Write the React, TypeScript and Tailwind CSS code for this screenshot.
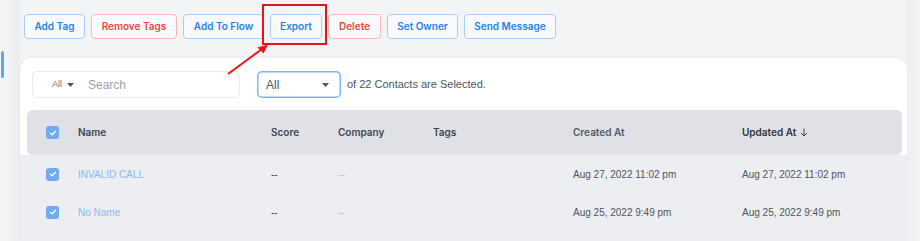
import React from 'react';

const cols = 'grid grid-cols-[32px_193px_67px_95px_140px_169px_1fr] items-center';

const actions = [
  { label: 'Add Tag', w: 'w-[61px]', danger: false },
  { label: 'Remove Tags', w: 'w-[86px]', danger: true },
  { label: 'Add To Flow', w: 'w-[81px]', danger: false },
  { label: 'Export', w: 'w-[52px]', danger: false },
  { label: 'Delete', w: 'w-[53px]', danger: true },
  { label: 'Set Owner', w: 'w-[71px]', danger: false },
  { label: 'Send Message', w: 'w-[92px]', danger: false },
];

const contacts = [
  { name: 'INVALID CALL', created: 'Aug 27, 2022 11:02 pm', updated: 'Aug 27, 2022 11:02 pm' },
  { name: 'No Name', created: 'Aug 25, 2022 9:49 pm', updated: 'Aug 25, 2022 9:49 pm' },
];

const Check: React.FC = () => (
  <span className="w-[13px] h-[13px] rounded-[3px] bg-[#72aaf2] flex items-center justify-center">
    <svg width="8" height="8" viewBox="0 0 8 8" fill="none">
      <path d="M1.5 4.2 3.2 5.8 6.5 2.3" stroke="white" strokeWidth="1.3" strokeLinecap="round" strokeLinejoin="round" />
    </svg>
  </span>
);

const App: React.FC = () => {
  return (
    <div className="relative w-[920px] h-[241px] overflow-hidden bg-[#f3f4f6] flex font-['Inter',sans-serif]">
      {/* sidebar edge */}
      <div className="w-[20px] shrink-0 bg-gradient-to-r from-[#f5f6f8] to-[#eceef1]">
        <div className="mt-[51px] ml-[1px] w-[3px] h-[27px] rounded-[2px] bg-[#63a4f4]" />
      </div>

      <div className="w-[887px] shrink-0 flex flex-col">
        {/* bulk actions */}
        <div className="flex gap-[6px] pl-[4px] pt-[14px]">
          {actions.map((a) => (
            <button
              key={a.label}
              className={`${a.w} h-[25px] rounded-[4px] border bg-[#f8fafd] text-[10px] font-semibold flex items-center justify-center ${
                a.danger ? 'border-[#f6b9b9] text-[#ef4444]' : 'border-[#a9cdf6] text-[#2383e8]'
              }`}
            >
              {a.label}
            </button>
          ))}
        </div>

        {/* card */}
        <div className="mt-[19px] flex-1 rounded-t-[12px] bg-white shadow-[0_0_4px_rgba(0,0,0,0.05)] flex flex-col overflow-hidden">
          <div className="flex items-center px-[12px] pt-[13px] font-['Liberation_Sans',Arial,sans-serif]">
            <div className="w-[208px] h-[27px] rounded-[5px] border border-[#e8eaee] flex items-center pl-[19px]">
              <span className="text-[9px] text-[#6b7280]">All</span>
              <svg className="ml-[5px]" width="7" height="4" viewBox="0 0 7 4">
                <path d="M0 0h7L3.5 4z" fill="#4b5563" />
              </svg>
              <span className="ml-[14px] text-[12px] text-[#9ca3af]">Search</span>
            </div>
            <div className="ml-[17px] w-[84px] h-[27px] rounded-[5px] shadow-[inset_0_0_0_1.5px_#80b5f3] flex items-center justify-between pl-[9px] pr-[12px]">
              <span className="text-[12px] text-[#4b5563]">All</span>
              <svg width="7" height="4" viewBox="0 0 7 4">
                <path d="M0 0h7L3.5 4z" fill="#4b5563" />
              </svg>
            </div>
            <span className="ml-[6px] text-[11px] text-[#4b5563]">of 22 Contacts are Selected.</span>
          </div>

          {/* table header */}
          <div className={`${cols} mt-[12px] ml-[7px] mr-[5px] h-[45px] rounded-[6px] bg-[#dfe1e6] pl-[19px] text-[10px] font-semibold text-[#3f4551]`}>
            <Check />
            <span>Name</span>
            <span>Score</span>
            <span>Company</span>
            <span>Tags</span>
            <span className="text-[#555b66]">Created At</span>
            <span className="flex items-center gap-[4px] text-[#2f3440]">
              Updated At
              <svg width="8" height="9" viewBox="0 0 8 9" fill="none">
                <path d="M4 0.5v7.5M1 5l3 3 3-3" stroke="#3f4551" strokeWidth="1" />
              </svg>
            </span>
          </div>

          {/* rows */}
          <div className="flex-1 bg-[#edeef1] font-['Liberation_Sans',Arial,sans-serif] text-[10px]">
            {contacts.map((c) => (
              <div key={c.name} className={`${cols} h-[38px] pl-[26px]`}>
                <Check />
                <span className="text-[#8bb9f0]">{c.name}</span>
                <span className="text-[#374151]">--</span>
                <span className="text-[#b3c6e0]">--</span>
                <span />
                <span className="text-[#50555e]">{c.created}</span>
                <span className="text-[#50555e]">{c.updated}</span>
              </div>
            ))}
          </div>
        </div>
      </div>

      <div className="flex-1 bg-gradient-to-r from-[#eceef1] to-[#f3f4f6]" />

      {/* annotation overlay */}
      <svg className="absolute left-0 top-0 pointer-events-none" width="920" height="241">
        <rect x="263" y="5" width="63" height="39" fill="none" stroke="#e8141b" strokeWidth="2" />
        <line x1="228" y1="74" x2="262" y2="49" stroke="#e8141b" strokeWidth="2" />
        <path d="M268 44.5 L257.5 47.5 L263.5 53.5 Z" fill="#e8141b" />
      </svg>
    </div>
  );
};

export default App;
